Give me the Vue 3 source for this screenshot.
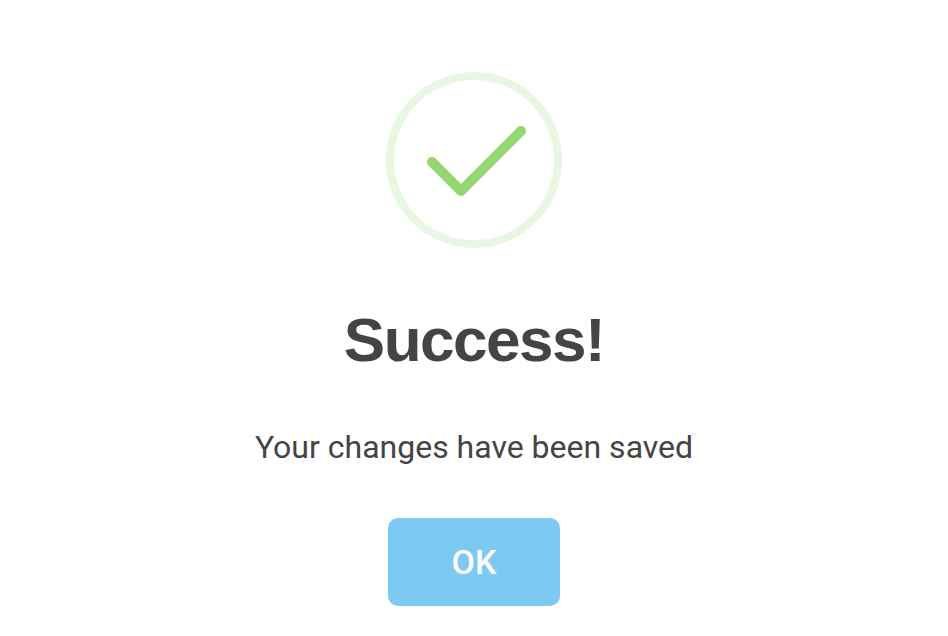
<template>
  <div class="dialog">
    <svg class="icon" width="176" height="176" viewBox="0 0 176 176" fill="none">
      <circle cx="88" cy="88" r="84" stroke="#e9f6e2" stroke-width="8" />
      <path d="M46 90 L75 119 L135 59" stroke="#93d672" stroke-width="10" stroke-linecap="round" stroke-linejoin="round" />
    </svg>
    <h1 class="title">Success!</h1>
    <p class="message">Your changes have been saved</p>
    <button class="ok-btn">OK</button>
  </div>
</template>

<script setup>
</script>

<style>
html, body {
  background: #fff;
}
</style>

<style scoped>
.dialog {
  width: 948px;
  height: 636px;
  padding-top: 72px;
  box-sizing: border-box;
  display: flex;
  flex-direction: column;
  align-items: center;
  background: #fff;
  color: #444;
}

.icon {
  display: block;
}

.title {
  margin: 54px 0 0;
  font-family: "Liberation Sans", Arial, sans-serif;
  font-size: 62px;
  line-height: 76px;
  font-weight: 700;
  letter-spacing: -1.5px;
  color: #444;
}

.message {
  margin: 47px 0 0;
  font-family: Roboto, "Liberation Sans", sans-serif;
  font-size: 32px;
  line-height: 44px;
  color: #444;
}

.ok-btn {
  margin-top: 49px;
  width: 172px;
  height: 88px;
  border: none;
  border-radius: 10px;
  background: #7dc9f3;
  color: #fff;
  font-family: Roboto, "Liberation Sans", sans-serif;
  font-size: 34px;
  font-weight: 500;
}
</style>
